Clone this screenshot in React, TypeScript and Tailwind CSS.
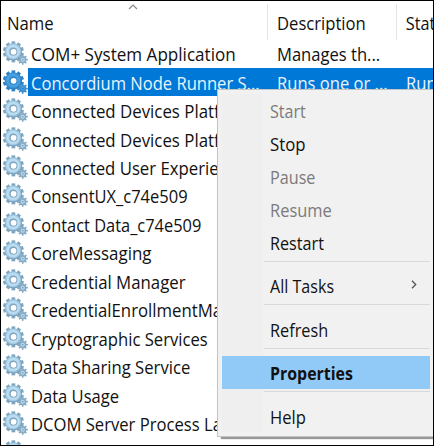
import React from "react";

const GEAR_ANGLES = [0, 36, 72, 108, 144, 180, 216, 252, 288, 324];
const SMALL_ANGLES = [0, 45, 90, 135];

function Gear({ active }: { active?: boolean }) {
  const edge = active ? "#2d80c4" : "#7fa4be";
  const body = active ? "#3a93d8" : "#a0cae5";
  const light = active ? "#4ba0e0" : "#bcdcf0";
  const small = active ? "#3f90d0" : "#86abc5";
  return (
    <svg width="25" height="25" viewBox="0 0 26 26" className="shrink-0">
      {GEAR_ANGLES.map((a) => (
        <rect key={a} x="8.9" y="0.4" width="3.8" height="5" fill={edge} transform={`rotate(${a} 10.8 11.3)`} />
      ))}
      <circle cx="10.8" cy="11.3" r="9" fill={edge} />
      <circle cx="10.5" cy="10.8" r="8.3" fill={body} />
      <circle cx="10.5" cy="10.8" r="5.8" fill="none" stroke={light} strokeWidth="2.4" />
      <circle cx="10.8" cy="11.1" r="4" fill={edge} />
      <circle cx="11" cy="11.3" r="3" fill="#fff" />
      {SMALL_ANGLES.map((a) => (
        <rect key={a} x="19.7" y="14" width="1.6" height="10.8" fill={small} transform={`rotate(${a} 20.5 19.4)`} />
      ))}
      <circle cx="20.5" cy="19.4" r="3.8" fill={small} />
      <circle cx="20.5" cy="19.4" r="2.1" fill={light} />
      <circle cx="20.5" cy="19.4" r="1" fill={edge} />
    </svg>
  );
}

const services = [
  { name: "COM+ System Application", cls: "scale-x-[.976]", description: "Manages th..." },
  { name: "Concordium Node Runner S...", cls: "scale-x-[.946]", description: "Runs one or ...", status: "Run", active: true },
  { name: "Connected Devices Platf", cls: "scale-x-[.962]" },
  { name: "Connected Devices Platf", cls: "scale-x-[.962]" },
  { name: "Connected User Experien", cls: "scale-x-[.958]" },
  { name: "ConsentUX_c74e509", cls: "scale-x-[.942]" },
  { name: "Contact Data_c74e509", cls: "scale-x-[.937]" },
  { name: "CoreMessaging", cls: "scale-x-[.967]" },
  { name: "Credential Manager", cls: "scale-x-[.96]" },
  { name: "CredentialEnrollmentMa", cls: "scale-x-[.958]" },
  { name: "Cryptographic Services", cls: "scale-x-[.951]" },
  { name: "Data Sharing Service", cls: "scale-x-[.952]" },
  { name: "Data Usage", cls: "scale-x-[.946]" },
  { name: "DCOM Server Process La", cls: "scale-x-[.95]" },
  { name: "", cls: "" },
];

type ItemProps = { label: string; cls: string; disabled?: boolean; selected?: boolean; submenu?: boolean };

function MenuItem({ label, cls, disabled, selected, submenu }: ItemProps) {
  return (
    <div
      className={`relative ml-1 mr-[6px] flex h-[33px] items-center justify-between pl-[48px] pr-[13px] ${selected ? "bg-[#91c9f7] font-bold" : "pt-[1.5px]"} ${disabled ? "text-[#7b7b7b]" : "text-[#111]"}`}
    >
      <span className={`origin-left ${cls}`}>{label}</span>
      {submenu && (
        <svg width="6" height="9" viewBox="0 0 6 9" fill="none" stroke="#555" strokeWidth="1.3" className="-mt-[3px]">
          <path d="M1 .8 4.7 4.5 1 8.2" />
        </svg>
      )}
    </div>
  );
}

function Separator() {
  return (
    <div className="h-[10.5px] pt-[2px] pr-[6px] pl-[46px]">
      <div className="h-px w-full bg-[#d9d9d9]" />
    </div>
  );
}

export default function App() {
  return (
    <div className="relative h-[446px] w-[434px] overflow-hidden border border-black bg-white font-['Open_Sans',sans-serif] text-[17.5px] leading-[24px] whitespace-nowrap text-[#111]">
      <div className="relative flex h-[38.5px] pt-[3px]">
        <div className="h-[36px] w-[267px] shrink-0 border-r border-[#e5e5e5] pt-[7px] pl-[6px]">
          <div className="origin-left scale-x-[.955]">Name</div>
        </div>
        <div className="h-[36px] w-[129px] shrink-0 border-r border-[#e5e5e5] pt-[7px] pl-[9px]">
          <div className="origin-left scale-x-[.95]">Description</div>
        </div>
        <div className="origin-left scale-x-[.93] pt-[7px] pl-[9.5px]">Stat</div>
        <svg width="10" height="6" viewBox="0 0 10 6" fill="none" stroke="#888" strokeWidth="1.2" className="absolute top-[3px] left-[127px]">
          <path d="M1 5 5 1 9 5" />
        </svg>
      </div>
      {services.map((s, i) => (
        <div key={i} className="flex h-[28.46px] items-center">
          <div className="flex w-[27px] shrink-0 pl-[2px]">
            <Gear active={s.active} />
          </div>
          <div className={`flex h-full flex-1 items-center pt-px ${s.active ? "bg-[#0078d7] text-[#e9f4fd]" : ""}`}>
            <div className="w-[248.5px] shrink-0 pl-[2.5px]">
              <div className={`origin-left ${s.cls}`}>{s.name}</div>
            </div>
            <div className="w-[129.5px] shrink-0 origin-left scale-x-[.947]">{s.description}</div>
            <div className="origin-left scale-x-[.95]">{s.status}</div>
          </div>
        </div>
      ))}
      <div className="absolute top-[88px] left-[216px] h-[348px] w-[220px] border border-[#c4c4c4] bg-[#f1f1f1] pt-[3.5px] shadow-[4px_2px_1px_rgba(0,0,0,0.4)]">
        <div className="absolute top-[4px] left-[4px] h-[338px] w-[41px] bg-[#efefef]" />
        <MenuItem label="Start" cls="scale-x-[.92]" disabled />
        <MenuItem label="Stop" cls="scale-x-[.96]" />
        <MenuItem label="Pause" cls="scale-x-[.925]" disabled />
        <MenuItem label="Resume" cls="scale-x-[.94]" disabled />
        <MenuItem label="Restart" cls="scale-x-[.925]" />
        <Separator />
        <MenuItem label="All Tasks" cls="scale-x-[.92]" submenu />
        <Separator />
        <MenuItem label="Refresh" cls="scale-x-[.93]" />
        <Separator />
        <MenuItem label="Properties" cls="scale-x-[.91]" selected />
        <Separator />
        <MenuItem label="Help" cls="scale-x-[.945]" />
      </div>
    </div>
  );
}
